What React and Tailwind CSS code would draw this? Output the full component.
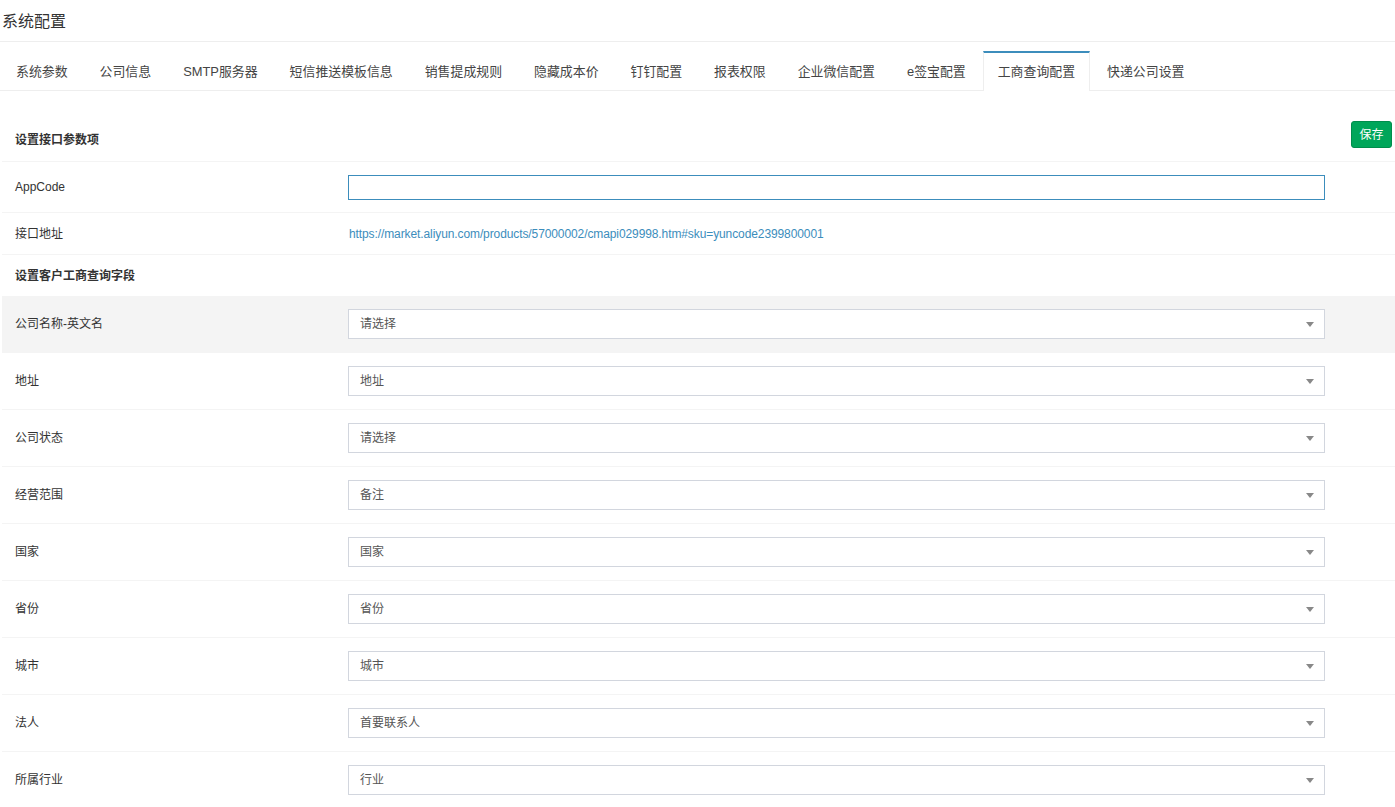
import React from "react";

const tabs = [
  "系统参数",
  "公司信息",
  "SMTP服务器",
  "短信推送模板信息",
  "销售提成规则",
  "隐藏成本价",
  "钉钉配置",
  "报表权限",
  "企业微信配置",
  "e签宝配置",
  "工商查询配置",
  "快递公司设置",
];

const fields = [
  { label: "公司名称-英文名", value: "请选择" },
  { label: "地址", value: "地址" },
  { label: "公司状态", value: "请选择" },
  { label: "经营范围", value: "备注" },
  { label: "国家", value: "国家" },
  { label: "省份", value: "省份" },
  { label: "城市", value: "城市" },
  { label: "法人", value: "首要联系人" },
  { label: "所属行业", value: "行业" },
];

const font = { fontFamily: '"Liberation Sans", "Noto Sans CJK SC", sans-serif' };

const SelectBox = ({ value }) => (
  <div className="h-[30px] w-full border border-[#d2d6de] bg-white flex items-center justify-between pl-[11px] pr-[10px] text-[12px] text-[#555]">
    <span>{value}</span>
    <svg width="8" height="5" viewBox="0 0 8 5">
      <path d="M0 0 L8 0 L4 5 Z" fill="#888" />
    </svg>
  </div>
);

const App = () => {
  const activeTab = "工商查询配置";

  return (
    <div className="w-[1395px] h-[807px] overflow-hidden bg-white text-[#333]" style={font}>
      {/* page title */}
      <div className="h-[42px] border-b border-[#eee] pl-[2px] pt-[11px] text-[16px] leading-[22px] text-[#333]">
        系统配置
      </div>

      {/* tabs */}
      <div className="h-[49px] border-b border-[#eee] pt-[9px] pl-px flex">
        {tabs.map((t) => (
          <div
            key={t}
            className={
              t === activeTab
                ? "h-[40px] mr-[2px] px-[14px] flex items-center pb-[1px] text-[12.9px] text-[#444] bg-white border-t-2 border-t-[#3c8dbc] border-x border-x-[#eee] relative"
                : "h-[40px] mr-[2px] px-[15px] flex items-center pt-[2px] text-[12.9px] text-[#444]"
            }
          >
            {t}
          </div>
        ))}
      </div>

      {/* content */}
      <div className="ml-[2px] mt-[21px]">
        <div className="h-[50px] border-b border-[#f4f4f4] grid grid-cols-[346px_977px_1fr]">
          <div className="pl-[13px] pt-[20px] text-[12px] leading-[16px] font-bold">设置接口参数项</div>
          <div />
          <div className="flex justify-end pr-[3px] pt-[9px]">
            <button className="h-[27px] w-[41px] rounded-[3px] bg-[#00a65a] border border-[#008d4c] text-white text-[12px]">
              保存
            </button>
          </div>
        </div>

        <div className="h-[51px] border-b border-[#f4f4f4] grid grid-cols-[346px_977px_1fr] items-center">
          <div className="pl-[13px] text-[12px]">AppCode</div>
          <div className="h-[25px] border border-[#3c8dbc] bg-white" />
          <div />
        </div>

        <div className="h-[42px] border-b border-[#f4f4f4] grid grid-cols-[346px_977px_1fr] items-center">
          <div className="pl-[13px] text-[12px]">接口地址</div>
          <div className="pl-px text-[12px] tracking-[-0.1px] text-[#3c8dbc]">
            https://market.aliyun.com/products/57000002/cmapi029998.htm#sku=yuncode2399800001
          </div>
          <div />
        </div>

        <div className="h-[41px] flex items-center pl-[13px] text-[12px] font-bold">设置客户工商查询字段</div>

        {fields.map((f, i) => (
          <div
            key={f.label}
            className={
              i === 0
                ? "h-[57px] bg-[#f4f4f4] border-b border-[#f4f4f4] grid grid-cols-[346px_977px_1fr] items-center"
                : "h-[57px] border-b border-[#f4f4f4] grid grid-cols-[346px_977px_1fr] items-center"
            }
          >
            <div className="pl-[13px] text-[12px]">{f.label}</div>
            <SelectBox value={f.value} />
            <div />
          </div>
        ))}
      </div>
    </div>
  );
};

export default App;
